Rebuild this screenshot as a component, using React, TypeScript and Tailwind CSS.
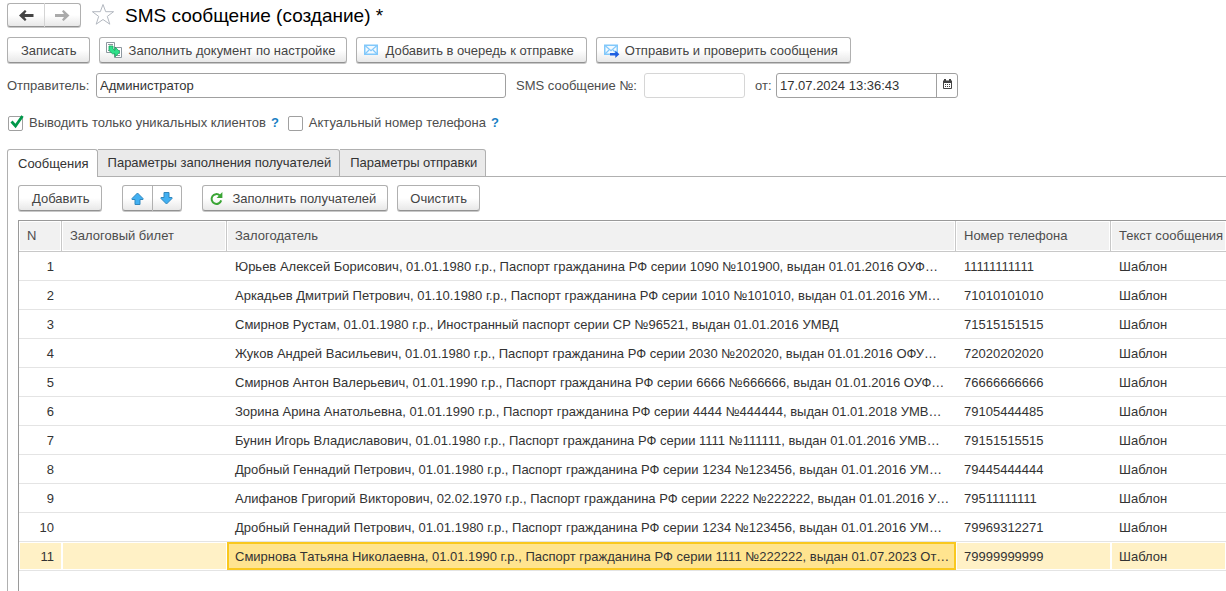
import type { ReactNode } from "react";

type Row = { client: string; phone: string };

const rows: Row[] = [
  { client: "Юрьев Алексей Борисович, 01.01.1980 г.р., Паспорт гражданина РФ серии 1090 №101900, выдан 01.01.2016 ОУФ…", phone: "11111111111" },
  { client: "Аркадьев Дмитрий Петрович, 01.10.1980 г.р., Паспорт гражданина РФ серии 1010 №101010, выдан 01.01.2016 УМ…", phone: "71010101010" },
  { client: "Смирнов Рустам, 01.01.1980 г.р., Иностранный паспорт серии СР №96521, выдан 01.01.2016 УМВД", phone: "71515151515" },
  { client: "Жуков Андрей Васильевич, 01.01.1980 г.р., Паспорт гражданина РФ серии 2030 №202020, выдан 01.01.2016 ОФУ…", phone: "72020202020" },
  { client: "Смирнов Антон Валерьевич, 01.01.1990 г.р., Паспорт гражданина РФ серии 6666 №666666, выдан 01.01.2016 ОУФ…", phone: "76666666666" },
  { client: "Зорина Арина Анатольевна, 01.01.1990 г.р., Паспорт гражданина РФ серии 4444 №444444, выдан 01.01.2018 УМВ…", phone: "79105444485" },
  { client: "Бунин Игорь Владиславович, 01.01.1980 г.р., Паспорт гражданина РФ серии 1111 №111111, выдан 01.01.2016 УМВ…", phone: "79151515515" },
  { client: "Дробный Геннадий Петрович, 01.01.1980 г.р., Паспорт гражданина РФ серии 1234 №123456, выдан 01.01.2016 УМ…", phone: "79445444444" },
  { client: "Алифанов Григорий Викторович, 02.02.1970 г.р., Паспорт гражданина РФ серии 2222 №222222, выдан 01.01.2016 У…", phone: "79511111111" },
  { client: "Дробный Геннадий Петрович, 01.01.1980 г.р., Паспорт гражданина РФ серии 1234 №123456, выдан 01.01.2016 УМ…", phone: "79969312271" },
  { client: "Смирнова Татьяна Николаевна, 01.01.1990 г.р., Паспорт гражданина РФ серии 1111 №222222, выдан 01.07.2023 От…", phone: "79999999999" },
];

const selectedRow = 10;

function Arrow({ className, flip = false }: { className: string; flip?: boolean }) {
  return (
    <svg width="15" height="11" viewBox="0 0 15 11" className={className} aria-hidden="true">
      <path
        d={flip ? "M0 4h9L7 1.2 8.6 0 14.5 5.5 8.6 11 7 9.8 9 7H0z" : "M14.5 4h-9l2-2.8L5.9 0 0 5.5 5.9 11l1.6-1.2L5.5 7h9z"}
        fill="currentColor"
      />
    </svg>
  );
}

function Star() {
  return (
    <svg width="24" height="23" viewBox="0 0 24 23" aria-hidden="true">
      <path d="M12 1.5 14.7 8.7H22.6L16.3 13.4 18.8 21.2 12 16.5 5.2 21.2 7.7 13.4 1.4 8.7H9.3Z" fill="#fff" stroke="#b3b8c0" />
    </svg>
  );
}

function CopyIcon() {
  return (
    <svg width="17" height="17" viewBox="0 0 17 17" aria-hidden="true">
      <path d="M.5.5h8v10h-8z" fill="#fff" stroke="#8d979f" />
      <path d="M2 2.5h5M2 8.5h1" stroke="#8d979f" />
      <path d="M8.5 5.5h7v10h-7z" fill="#fff" stroke="#8d979f" />
      <path d="M13 8.5h1M13 11.5h1M10 13.5h4" stroke="#8d979f" />
      <path d="M3 4h4v3l1.5 1.3H9V5l5 4.9-5 4.9v-3H6.5L3 8.5z" fill="#2fe08a" stroke="#12a35a" strokeWidth=".8" />
    </svg>
  );
}

function MailIcon({ send = false }: { send?: boolean }) {
  return (
    <svg width="16" height="14" viewBox="0 0 16 14" aria-hidden="true">
      <path d="M.75 1.25h12.5v9H.75z" fill="#f3faff" stroke="#82c8fa" strokeWidth="1.5" />
      <path d="M1 1.5l6 5.2 6-5.2M1 10l4-4M13 10 9 6" fill="none" stroke="#82c8fa" strokeWidth="1.2" />
      {send && <path d="M6 9h5.3V6.6L15.4 10.3 11.3 14v-2.4H6z" fill="#1f5fe0" />}
    </svg>
  );
}

function MoveIcon({ down = false }: { down?: boolean }) {
  return (
    <svg width="13" height="13" viewBox="0 0 13 13" aria-hidden="true">
      <path
        d={down ? "M6.5 12 1 6.5V5.5h3V.5h5v5h3v1z" : "M6.5 1 12 6.5v1H9v5H4v-5H1v-1z"}
        fill="#41b0f2"
        stroke="#3187bd"
      />
    </svg>
  );
}

function RefreshIcon() {
  return (
    <svg width="13" height="14" viewBox="0 0 13 14" aria-hidden="true">
      <path d="M9.8 3.4A4.9 4.9 0 1 0 11.2 8.4" fill="none" stroke="#3aa535" strokeWidth="2" />
      <path d="M12.4 0v6H6.6z" fill="#3aa535" />
    </svg>
  );
}

function CalendarIcon() {
  return (
    <svg width="9" height="11" viewBox="0 0 9 11" aria-hidden="true">
      <path d="M.5 2.5h8v7h-8z" fill="#fff" stroke="#444" />
      <path d="M0 1.5h9V4H0zM1 0h2v2H1zM6 0h2v2H6z" fill="#444" />
      <path d="M2 5.5h5M2 7.5h5" stroke="#444" strokeDasharray="1 1" />
    </svg>
  );
}

const buttonBase =
  "flex items-center whitespace-nowrap border border-[#b0b0b0] border-b-[#929292] bg-linear-to-b from-white from-50% to-[#e8e8e8] text-[#444] shadow-[0_1px_0_#c8c8c8]";

function Button({ children, className }: { children: ReactNode; className: string }) {
  return (
    <button type="button" className={`${buttonBase} h-[26px] rounded-[3px] pt-px ${className}`}>
      {children}
    </button>
  );
}

function Check({ label, checked = false }: { label: string; checked?: boolean }) {
  return (
    <div className="flex items-center">
      <label className="flex items-center gap-[6px]">
        <span className="relative flex size-[15px]">
          <input
            type="checkbox"
            defaultChecked={checked}
            className="peer size-[15px] appearance-none rounded-[2px] border border-[#a0a0a0] bg-white"
          />
          <svg
            width="15"
            height="14"
            viewBox="0 0 15 14"
            className="pointer-events-none absolute -top-px left-px hidden peer-checked:block"
            aria-hidden="true"
          >
            <path d="M2.5 6.5 6.5 11 13.5 1" fill="none" stroke="#00984a" strokeWidth="2.8" />
          </svg>
        </span>
        {label}
      </label>
      <button type="button" className="ml-[5px] font-bold text-[#1a7fc4]">
        ?
      </button>
    </div>
  );
}

const tabs = ["Сообщения", "Параметры заполнения получателей", "Параметры отправки"];
const headings = ["N", "Залоговый билет", "Залогодатель", "Номер телефона", "Текст сообщения"];

export default function App() {
  return (
    <main className="flex min-h-screen flex-col overflow-hidden bg-white pt-[3px] pl-[7px] font-['Liberation_Sans',Arial,sans-serif] text-[13px] leading-4 text-[#4d4d4d]">
      <header className="flex h-[26px] items-start">
        <div className="flex">
          <button type="button" aria-label="Назад" className={`${buttonBase} h-[24px] w-[38px] justify-center rounded-l-[3px] border-r-[#d4d4d4]`}>
            <Arrow className="text-[#444]" />
          </button>
          <button type="button" aria-label="Вперёд" className={`${buttonBase} h-[24px] w-[36px] justify-center rounded-r-[3px] border-l-0`}>
            <Arrow flip className="text-[#aaa]" />
          </button>
        </div>
        <button type="button" aria-label="В избранное" className="ml-[10px]">
          <Star />
        </button>
        <h1 className="ml-[10px] text-[19px] leading-[26px] text-black">SMS сообщение (создание) *</h1>
      </header>

      <div className="mt-[8px] flex gap-[9px]">
        <Button className="pr-[12px] pl-[13px]">Записать</Button>
        <Button className="gap-[6px] pr-[11px] pl-[6px]">
          <CopyIcon />
          Заполнить документ по настройке
        </Button>
        <Button className="gap-[5px] pr-[12px] pl-[7px]">
          <MailIcon />
          Добавить в очередь к отправке
        </Button>
        <Button className="gap-[5px] pr-[12px] pl-[7px]">
          <MailIcon send />
          Отправить и проверить сообщения
        </Button>
      </div>

      <div className="mt-[10px] flex items-center">
        <label htmlFor="sender" className="w-[89px]">
          Отправитель:
        </label>
        <input id="sender" defaultValue="Администратор" className="h-[25px] w-[410px] rounded-[3px] border border-[#a0a0a0] px-[3px] text-[#333]" />
        <label htmlFor="number" className="ml-[10px] w-[128px] whitespace-nowrap">
          SMS сообщение №:
        </label>
        <input id="number" className="h-[25px] w-[101px] rounded-[3px] border border-[#d6d6d6] px-[3px]" />
        <label htmlFor="date" className="ml-[10px] w-[21px]">
          от:
        </label>
        <div className="flex h-[25px] w-[182px] overflow-hidden rounded-[3px] border border-[#a0a0a0]">
          <input id="date" defaultValue="17.07.2024 13:36:43" className="min-w-0 flex-1 px-[3px] text-[#333]" />
          <button type="button" aria-label="Выбрать дату" className="flex w-[21px] items-start justify-center border-l border-[#a0a0a0] pt-[5px]">
            <CalendarIcon />
          </button>
        </div>
      </div>

      <div className="mt-[17px] ml-px flex gap-[9px]">
        <Check label="Выводить только уникальных клиентов" checked />
        <Check label="Актуальный номер телефона" />
      </div>

      <div className="mt-[18px] flex" role="tablist">
        {tabs.map((tab, i) => (
          <button
            key={tab}
            type="button"
            role="tab"
            aria-selected={i === 0}
            className={`h-[28px] border-t border-r border-[#b0b0b0] pr-[8px] pl-[10px] whitespace-nowrap text-[#333] ${
              i === 0 ? "rounded-t-[3px] border-l bg-white" : "rounded-tr-[3px] border-b bg-[#eaeaea]"
            }`}
          >
            {tab}
          </button>
        ))}
        <div className="flex-1 border-b border-[#b0b0b0]" />
      </div>

      <section className="flex flex-1 flex-col border-l border-[#b0b0b0] pt-[8px] pl-[10px]">
        <div className="flex">
          <Button className="pr-[12px] pl-[13px]">Добавить</Button>
          <div className="ml-[20px] flex">
            <button type="button" aria-label="Вверх" className={`${buttonBase} h-[26px] w-[31px] justify-center rounded-l-[3px]`}>
              <MoveIcon />
            </button>
            <button type="button" aria-label="Вниз" className={`${buttonBase} h-[26px] w-[29px] justify-center rounded-r-[3px] border-l-0 pr-[2px]`}>
              <MoveIcon down />
            </button>
          </div>
          <Button className="ml-[20px] gap-[9px] pr-[11px] pl-[7px]">
            <RefreshIcon />
            Заполнить получателей
          </Button>
          <Button className="ml-[9px] px-[12px]">Очистить</Button>
        </div>

        <div className="mt-[9px] flex-1 border-t border-l border-[#9a9a9a]">
          <table className="w-full table-fixed border-separate border-spacing-0">
            <colgroup>
              <col className="w-[43px]" />
              <col className="w-[165px]" />
              <col />
              <col className="w-[155px]" />
              <col className="w-[115px]" />
            </colgroup>
            <thead>
              <tr>
                {headings.map((heading, i) => (
                  <th
                    key={heading}
                    className={`h-[31px] border-b border-[#c8c8c8] bg-[#f1f1f1] pl-[8px] text-left font-normal whitespace-nowrap inset-shadow-[0_0_0_1px_#fff] ${i < 4 ? "border-r" : ""}`}
                  >
                    {heading}
                  </th>
                ))}
              </tr>
            </thead>
            <tbody className="text-[#333]">
              {rows.map((row, i) => {
                const selected = i === selectedRow;
                const cell = `h-[29px] border-b border-[#e4e4e4] px-[8px] pt-px whitespace-nowrap ${selected ? "bg-[#fff1c6] inset-shadow-[0_0_0_1px_#fff]" : ""}`;
                return (
                  <tr key={i}>
                    <td className={`${cell} text-right`}>{i + 1}</td>
                    <td className={cell} />
                    <td
                      className={
                        selected
                          ? "h-[29px] overflow-hidden border-b border-[#e4e4e4] bg-[#ffe48f] pt-px pl-[8px] whitespace-nowrap inset-shadow-[0_0_0_2px_#f9c81f]"
                          : `${cell} overflow-hidden`
                      }
                    >
                      {row.client}
                    </td>
                    <td className={cell}>{row.phone}</td>
                    <td className={cell}>Шаблон</td>
                  </tr>
                );
              })}
            </tbody>
          </table>
        </div>
      </section>
    </main>
  );
}
